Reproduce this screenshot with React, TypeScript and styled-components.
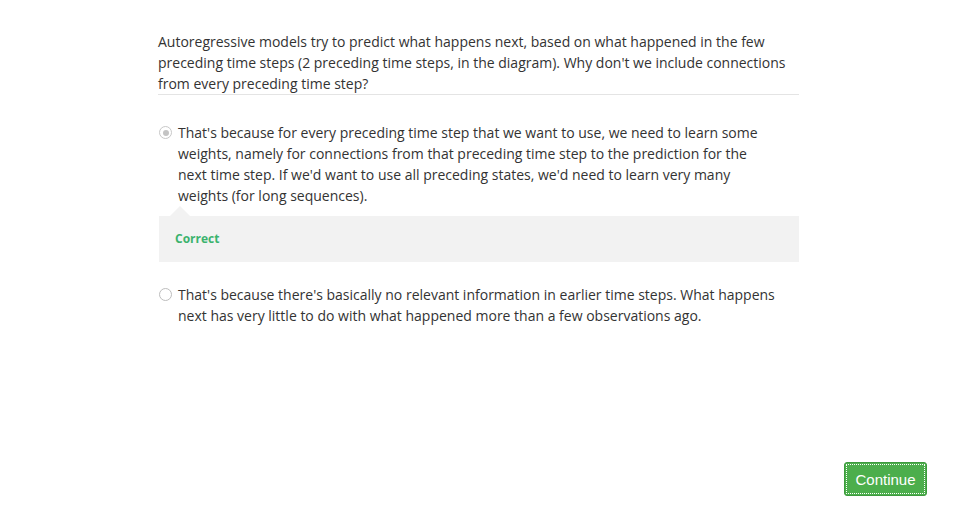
import { createGlobalStyle, styled } from "styled-components"

const GlobalStyle = createGlobalStyle`
  html, body {
    margin: 0;
    padding: 0;
    background: #fff;
  }
  body {
    font-family: "Open Sans", "Noto Sans", sans-serif;
    color: #333;
  }
`

interface Option {
  text: string
  checked: boolean
  feedback?: string
}

const options: Option[] = [
  {
    text: "That's because for every preceding time step that we want to use, we need to learn some weights, namely for connections from that preceding time step to the prediction for the next time step. If we'd want to use all preceding states, we'd need to learn very many weights (for long sequences).",
    checked: true,
    feedback: "Correct",
  },
  {
    text: "That's because there's basically no relevant information in earlier time steps. What happens next has very little to do with what happened more than a few observations ago.",
    checked: false,
  },
]

export default function App() {
  return (
    <Page>
      <GlobalStyle />
      <Quiz>
        <Question>
          Autoregressive models try to predict what happens next, based on what happened in the few
          preceding time steps (2 preceding time steps, in the diagram). Why don't we include connections
          from every preceding time step?
        </Question>
        <OptionList>
          {options.map((o, i) => (
            <OptionBlock key={i}>
              <OptionRow>
                <Radio $checked={o.checked} />
                <OptionText>{o.text}</OptionText>
              </OptionRow>
              {o.feedback && (
                <Feedback>
                  <FeedbackLabel>{o.feedback}</FeedbackLabel>
                </Feedback>
              )}
            </OptionBlock>
          ))}
        </OptionList>
      </Quiz>
      <Footer>
        <ContinueButton>Continue</ContinueButton>
      </Footer>
    </Page>
  )
}

const Page = styled.div`
  width: 958px;
  height: 507px;
  display: flex;
  flex-direction: column;
  justify-content: space-between;
  box-sizing: border-box;
  padding: 31px 0 11px;
`

const Quiz = styled.div`
  width: 641px;
  margin-left: 158px;
`

const Question = styled.p`
  margin: 0;
  font-size: 14px;
  line-height: 21px;
  border-bottom: 1px solid #e4e4e4;
`

const OptionList = styled.div`
  display: flex;
  flex-direction: column;
  gap: 22px;
  padding-top: 27px;
`

const OptionBlock = styled.div`
  display: flex;
  flex-direction: column;
`

const OptionRow = styled.div`
  display: flex;
  align-items: flex-start;
  gap: 6px;
  padding-left: 1px;
  max-width: 620px;
`

const Radio = styled.span<{ $checked: boolean }>`
  flex: none;
  width: 11px;
  height: 11px;
  margin-top: 4px;
  border-radius: 50%;
  border: 1px solid ${p => (p.$checked ? "#c8c8c8" : "#bdbdbd")};
  background: #fff;
  position: relative;

  &::after {
    content: "";
    display: ${p => (p.$checked ? "block" : "none")};
    position: absolute;
    left: 2.5px;
    top: 2.5px;
    width: 6px;
    height: 6px;
    border-radius: 50%;
    background: #c4c4c4;
  }
`

const OptionText = styled.p`
  margin: 0;
  font-size: 14px;
  line-height: 21px;
  color: #333;
`

const Feedback = styled.div`
  position: relative;
  margin-top: 10px;
  margin-left: 1px;
  background: #f2f2f2;
  padding: 15px 16px;

  &::before {
    content: "";
    position: absolute;
    left: 11px;
    top: -10px;
    border-left: 10px solid transparent;
    border-right: 10px solid transparent;
    border-bottom: 10px solid #f2f2f2;
  }
`

const FeedbackLabel = styled.span`
  display: block;
  font-size: 12px;
  font-weight: 700;
  line-height: 16px;
  color: #3bb36e;
`

const Footer = styled.div`
  display: flex;
  justify-content: flex-end;
  padding-right: 31px;
`

const ContinueButton = styled.button`
  width: 83px;
  height: 34px;
  background: #4cae4c;
  border: 1px solid #3e9a3e;
  border-radius: 3px;
  color: #fff;
  font-family: "Liberation Sans", Arial, sans-serif;
  font-size: 15px;
  outline: 1px dotted #fff;
  outline-offset: -3px;
  cursor: pointer;
`
